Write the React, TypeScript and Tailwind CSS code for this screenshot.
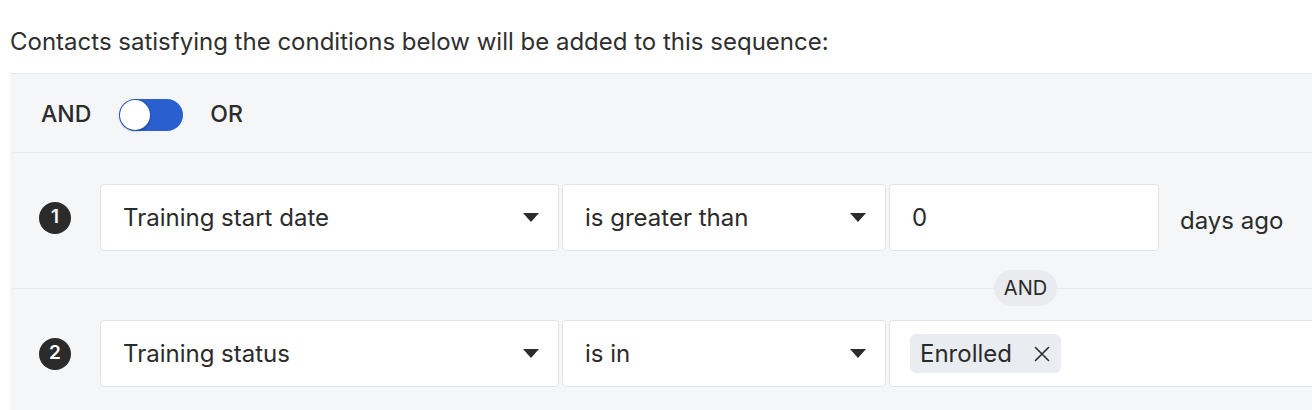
import React from 'react';

const font = { fontFamily: 'Inter, "Noto Sans", sans-serif' };

function Caret() {
  return (
    <svg width="16" height="9" viewBox="0 0 16 9" className="shrink-0">
      <path d="M0 0 L16 0 L8 9 Z" fill="#2b2b2b" />
    </svg>
  );
}

function SelectBox({ value, width }: { value: string; width: string }) {
  return (
    <div
      className={`${width} h-[67px] shrink-0 bg-white border border-[#e1e3e6] rounded-[4px] flex items-center justify-between pl-[22px] pr-[19px] text-[24px] text-[#2b2b2b]`}
    >
      <span>{value}</span>
      <Caret />
    </div>
  );
}

function StepBadge({ n }: { n: number }) {
  return (
    <div className="w-[32px] h-[32px] shrink-0 rounded-full bg-[#2b2b2b] text-white text-[19px] font-semibold flex items-center justify-center">
      {n}
    </div>
  );
}

export default function App() {
  return (
    <div className="w-[1312px] h-[410px] overflow-hidden bg-white text-[#2b2b2b]" style={font}>
      <div className="h-[73px] flex items-center pl-[10px] pt-[10px] text-[24px] text-[#2f2f2f]">
        Contacts satisfying the conditions below will be added to this sequence:
      </div>
      <div className="ml-[10px] w-[1340px] bg-[#f5f6f8] border-t border-[#e6e8eb]">
        <div className="h-[79px] flex items-center pl-[31px] pt-[3px] text-[23px] font-medium border-b border-[#e6e8eb]">
          <span>AND</span>
          <div className="ml-[28px] w-[64px] h-[32px] rounded-full bg-[#2a5fcf] p-[1px] flex items-center">
            <div className="w-[30px] h-[30px] rounded-full bg-white shadow-[0_1px_3px_rgba(0,0,0,0.35)]" />
          </div>
          <span className="ml-[27px]">OR</span>
        </div>

        <div className="relative h-[136px] pt-[31px] pl-[29px] flex items-start border-b border-[#e6e8eb]">
          <div className="h-[67px] flex items-center">
            <StepBadge n={1} />
          </div>
          <div className="ml-[29px] flex gap-[3px]">
            <SelectBox value="Training start date" width="w-[459px]" />
            <SelectBox value="is greater than" width="w-[324px]" />
            <div className="w-[270px] h-[67px] bg-white border border-[#e1e3e6] rounded-[4px] flex items-center pl-[22px] text-[24px]">
              0
            </div>
          </div>
          <div className="h-[67px] ml-[21px] flex items-center pt-[6px] text-[24px]">days ago</div>
          <div className="absolute left-[984px] bottom-[-18px] w-[63px] h-[36px] rounded-full bg-[#e9ebef] flex items-center justify-center text-[20px] text-[#2b2b2b] z-10">
            AND
          </div>
        </div>

        <div className="h-[121px] pt-[31px] pl-[29px] flex items-start">
          <div className="h-[67px] flex items-center">
            <StepBadge n={2} />
          </div>
          <div className="ml-[29px] flex gap-[3px]">
            <SelectBox value="Training status" width="w-[459px]" />
            <SelectBox value="is in" width="w-[324px]" />
            <div className="w-[460px] h-[67px] bg-white border border-[#e1e3e6] rounded-[4px] flex items-center pl-[20px]">
              <div className="h-[39px] rounded-[6px] bg-[#e9ecf0] flex items-center pl-[10px] pr-[11px] text-[24px]">
                <span>Enrolled</span>
                <svg width="16" height="16" viewBox="0 0 16 16" className="ml-[22px]">
                  <path d="M1.5 1.5 L14.5 14.5 M14.5 1.5 L1.5 14.5" stroke="#2b2b2b" strokeWidth="1.6" strokeLinecap="round" />
                </svg>
              </div>
            </div>
          </div>
        </div>
      </div>
    </div>
  );
}
